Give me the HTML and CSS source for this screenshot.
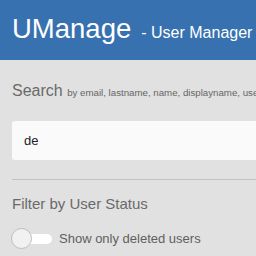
FILE: index.html
```html
<!DOCTYPE html>
<html>
<head>
<meta charset="utf-8">
<link rel="stylesheet" href="styles.css">
</head>
<body>
<header class="topbar">
  <span class="brand">UManage</span>
  <span class="subtitle">- User Manager</span>
</header>
<main class="content">
  <h2 class="search-title">Search <small class="search-hint">by email, lastname, name, displayname, username</small></h2>
  <div class="search-box">de</div>
  <hr class="divider">
  <h3 class="filter-title">Filter by User Status</h3>
  <label class="toggle-row">
    <span class="toggle"></span>
    <span class="toggle-label">Show only deleted users</span>
  </label>
</main>
</body>
</html>
```
FILE: styles.css
```css
html, body {
  margin: 0;
  padding: 0;
  overflow: hidden;
  background: #e1e1e1;
  font-family: "Liberation Sans", Arial, sans-serif;
}
.topbar {
  height: 60px;
  box-sizing: border-box;
  background: #3871b0;
  color: #fff;
  padding: 15px 0 0 12px;
  display: flex;
  align-items: baseline;
  white-space: nowrap;
  line-height: 1;
}
.brand {
  font-size: 27.5px;
}
.subtitle {
  font-size: 16px;
  margin-left: 10px;
}
.content {
  padding: 23px 0 0 12px;
  white-space: nowrap;
}
.search-title {
  margin: 0;
  font-weight: normal;
  font-size: 16px;
  line-height: 16px;
  color: #6a6a6a;
  overflow: hidden;
}
.search-hint {
  font-size: 9.7px;
  line-height: 1;
  color: #666;
}
.search-box {
  margin-top: 22px;
  height: 39px;
  box-sizing: border-box;
  background: #fafafa;
  border-radius: 3px 0 0 3px;
  padding-left: 12px;
  font-size: 13px;
  line-height: 39px;
  color: #222;
}
.divider {
  margin: 19px 0 0 0;
  border: 0;
  border-top: 1px solid #c2c2c2;
  height: 0;
}
.filter-title {
  margin: 16px 0 0 0;
  font-weight: normal;
  font-size: 15px;
  line-height: 15px;
  color: #6a6a6a;
}
.toggle-row {
  margin-top: 17px;
  display: flex;
  align-items: center;
  height: 21px;
}
.toggle {
  position: relative;
  width: 41px;
  height: 21px;
  flex: none;
  margin-left: -1px;
}
.toggle::before {
  content: "";
  position: absolute;
  left: 14px;
  top: 6px;
  width: 27px;
  height: 10px;
  border-radius: 5px;
  background: #fff;
}
.toggle::after {
  content: "";
  position: absolute;
  left: 0;
  top: 0;
  width: 19px;
  height: 19px;
  border-radius: 50%;
  background: #f1f1f1;
  border: 1px solid #bdbdbd;
}
.toggle-label {
  margin-left: 7px;
  font-size: 13px;
  line-height: 13px;
  color: #5f5f5f;
}
```
